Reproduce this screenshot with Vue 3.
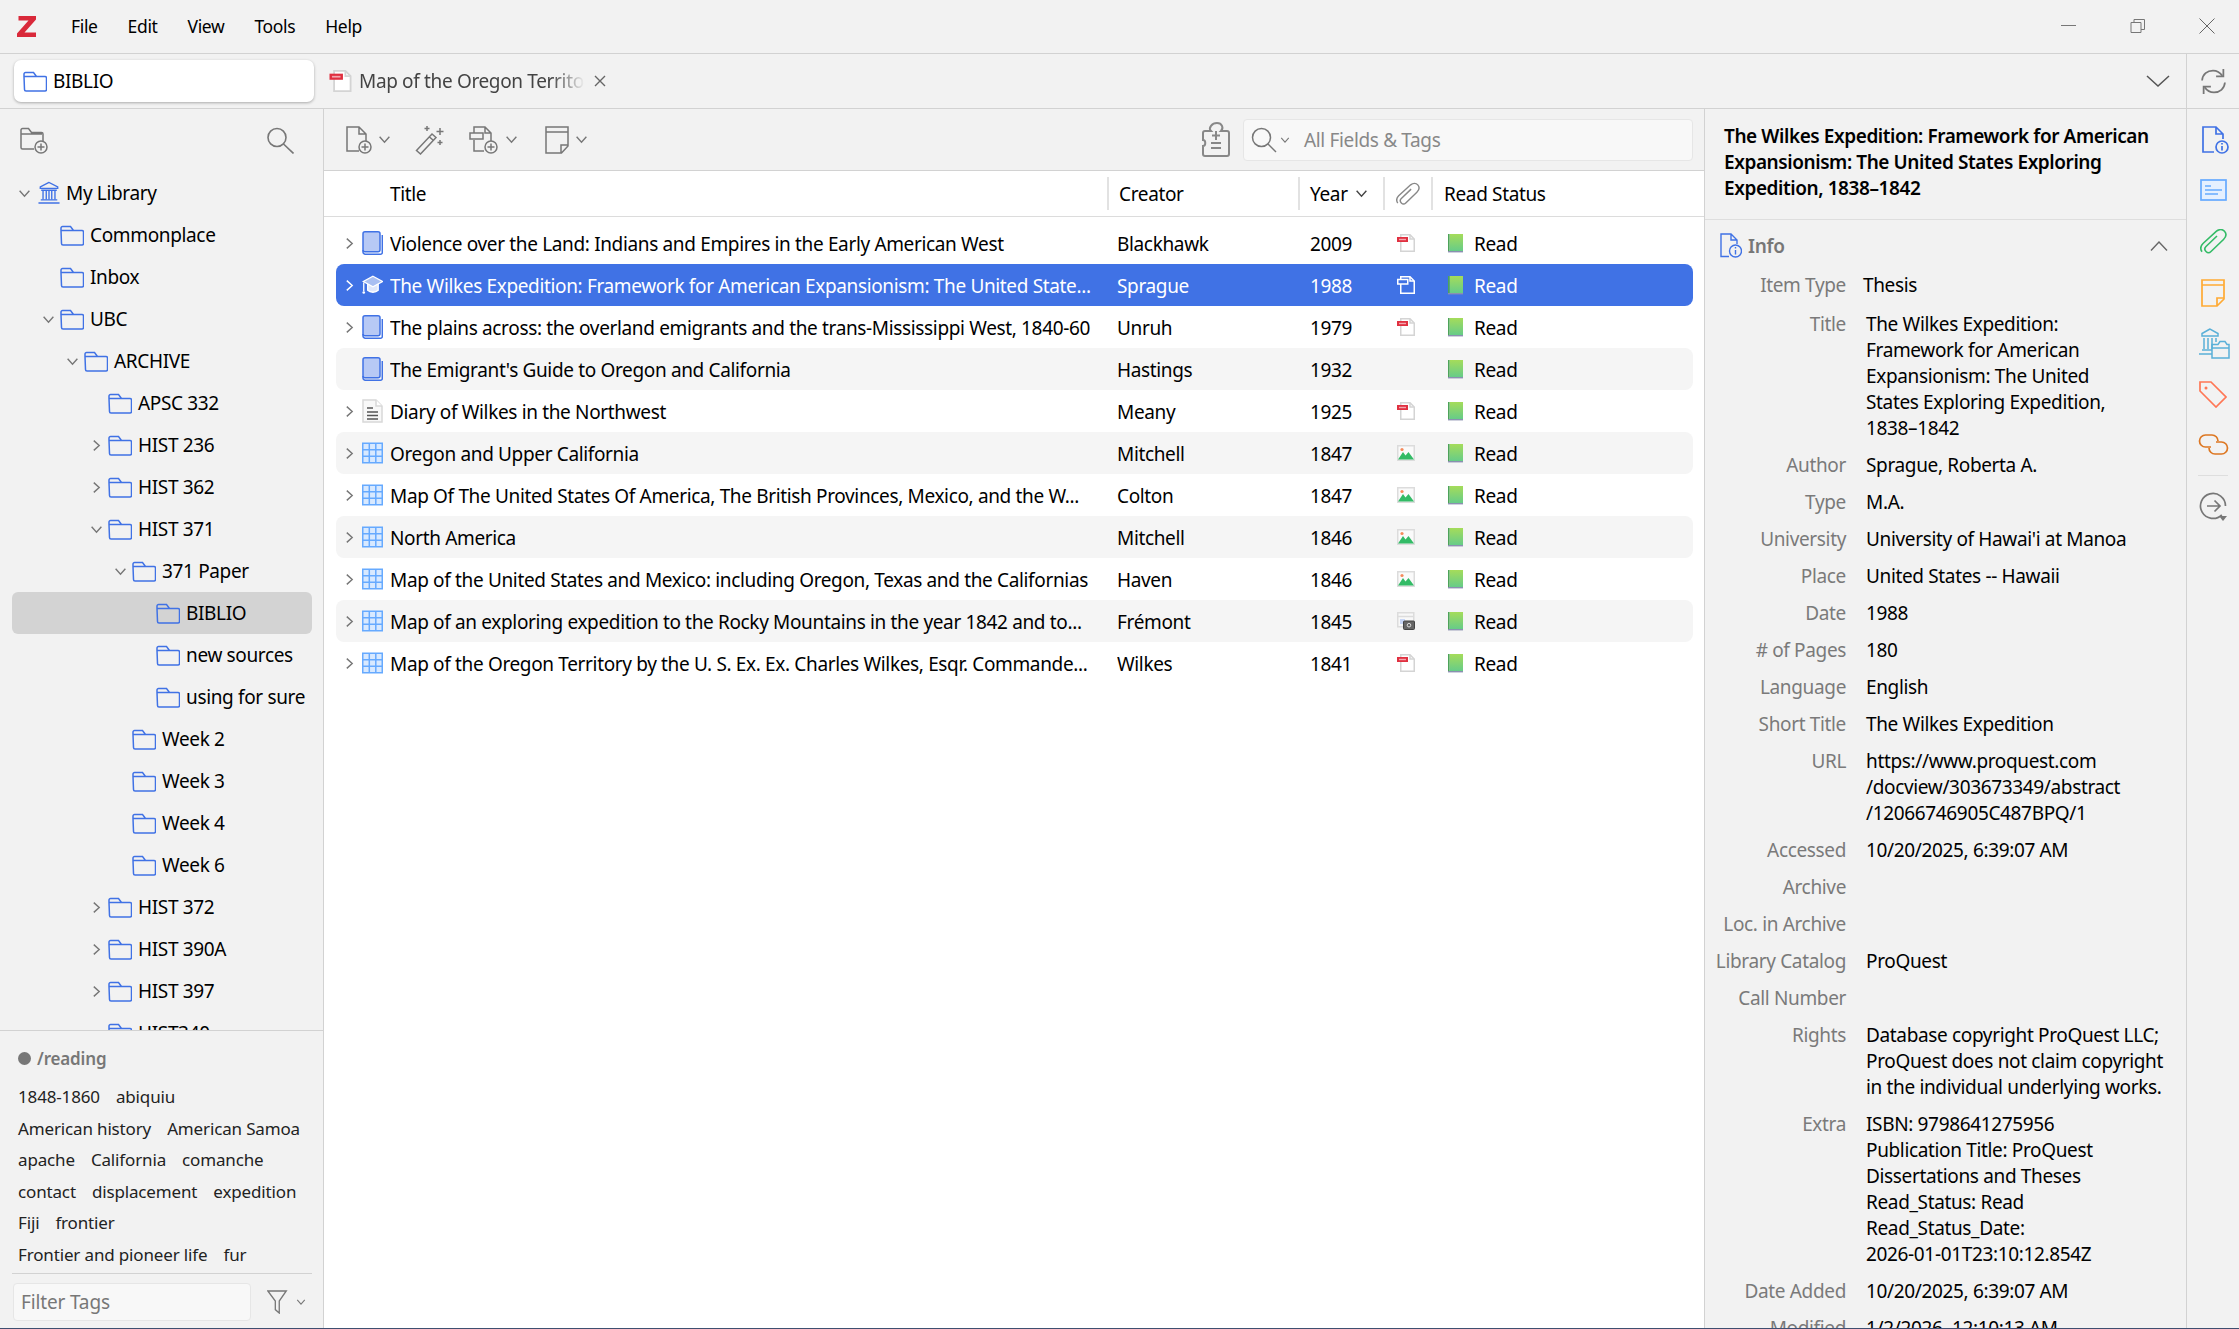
<template>
  <div class="app">
    <svg class="sprite" width="0" height="0">
      <defs>
        <symbol id="folder" viewBox="0 0 24 21">
          <path d="M1 5.5V3a1.5 1.5 0 0 1 1.5-1.5h8l3 4h8.500a1.500 1.500 0 0 1 1.500 1.500v11.500a1.500 1.500 0 0 1-1.500 1.500h-19a1.500 1.500 0 0 1-1.500-1.500zM1 5.500h12.500" fill="none" stroke="#4072e5" stroke-width="1.5" />
        </symbol>
        <symbol id="library" viewBox="0 0 24 25">
          <g fill="none" stroke="#4072e5" stroke-width="1.5">
            <path d="M12 1.5 2.500 6.500V8h19V6.500zM3.500 10h17M3 20.500h18M.5 24h23" />
            <path d="M5.500 10v10M9 10v10M12 10v10M15 10v10M18.500 10v10" />
          </g>
        </symbol>
        <symbol id="book" viewBox="0 0 21 24">
          <rect x="1" y=".75" width="17" height="20" rx="2" fill="#b7c9f5" stroke="#4072e5" stroke-width="1.5" />
          <path d="M1 19v2a2.200 2.200 0 0 0 2.200 2.200H18.500a1.800 1.800 0 0 0 1.800-1.800V4" fill="none" stroke="#4072e5" stroke-width="1.5" />
        </symbol>
        <symbol id="thesis" viewBox="0 0 24 24">
          <path d="M6.500 10v8c3 3 9 3 12 0v-8z" fill="#dfe7fb" stroke="#fff" stroke-width="1.5" />
          <path d="M12.500 2 23.500 8l-11 6L1.500 8z" fill="#a9bff2" stroke="#fff" stroke-width="1.5" />
          <path d="M2 9v10" fill="none" stroke="#fff" stroke-width="1.5" />
          <circle cx="2" cy="20.500" r="1.5" fill="#fff" />
        </symbol>
        <symbol id="doc" viewBox="0 0 21 24">
          <path d="M1 1h13l6 6v16H1z" fill="#f8f8f8" stroke="#d8d8d8" stroke-width="1.5" />
          <path d="M14 1v6h6" fill="#fff" stroke="#d8d8d8" stroke-width="1.5" />
          <path d="M5 9h6M5 13h11M5 16.500h11M5 20h11" stroke="#555" stroke-width="1.5" />
        </symbol>
        <symbol id="map" viewBox="0 0 21 21">
          <rect x=".75" y=".75" width="19.5" height="19.5" fill="#d8e9ff" stroke="#66aaff" stroke-width="1.5" />
          <path d="M7.300 1v19M13.800 1v19M1 7.300h19M1 13.800h19" stroke="#66aaff" stroke-width="1.5" />
        </symbol>
        <symbol id="pdf" viewBox="0 0 18 18">
          <path d="M3.750.75h9.250l4.250 4.250v12.250H3.750z" fill="#fff" stroke="#d4d4d4" stroke-width="1.5" />
          <path d="M13 1v4h4" fill="none" stroke="#d4d4d4" stroke-width="1.5" />
          <rect y="3" width="11" height="5" fill="#e03040" />
          <rect x="2" y="4.800" width="7" height="1.400" fill="#f2a6ae" />
        </symbol>
        <symbol id="pdfwhite" viewBox="0 0 18 18">
          <path d="M3.750 8V.75h9.250l4.250 4.250v12.250H3.750z" fill="none" stroke="#fff" stroke-width="1.5" />
          <path d="M13 1v4h4" fill="none" stroke="#fff" stroke-width="1.5" />
          <rect x=".75" y="3.500" width="10" height="4.500" fill="#4072e5" stroke="#fff" stroke-width="1.5" />
        </symbol>
        <symbol id="image" viewBox="0 0 18 16">
          <rect x=".75" y=".75" width="16.500" height="14.500" fill="#fafafa" stroke="#dcdcdc" stroke-width="1.5" />
          <circle cx="5" cy="4.500" r="1.600" fill="#f58a5c" />
          <path d="M1 14.500 6 7l2.500 3.500L11.500 7 17 14.500z" fill="#33bb66" />
        </symbol>
        <symbol id="snapshot" viewBox="0 0 18 18">
          <rect x=".75" y=".75" width="16" height="14" fill="#f8f8f8" stroke="#dcdcdc" stroke-width="1.5" />
          <path d="M1 4.500h15.500" stroke="#dcdcdc" stroke-width="1.5" />
          <rect x="3" y="7" width="5" height="5" fill="#c8d6f5" />
          <rect x="6.500" y="9" width="11" height="8.500" rx="1" fill="#666" stroke="#444" />
          <circle cx="12" cy="13.200" r="1.800" fill="#666" stroke="#ddd" />
        </symbol>
        <symbol id="readbook" viewBox="0 0 15 19">
          <defs>
            <linearGradient id="readfill" x1="0" y1="0" x2="0" y2="1">
              <stop offset="0" stop-color="#a5dc5a" />
              <stop offset="1" stop-color="#66cc88" />
            </linearGradient>
          </defs>
          <rect x="1.5" width="13.5" height="17" fill="url(#readfill)" />
          <rect width="1.5" height="17" fill="#4da35a" />
          <rect y="17" width="15" height="1.4" fill="#8a90b0" />
        </symbol>
        <symbol id="chev" viewBox="0 0 12 12">
          <path d="M1.500 3.500 6 8.500l4.500-5" fill="none" stroke="currentColor" stroke-width="1.3" />
        </symbol>
        <symbol id="clip" viewBox="0 0 27 25">
          <path d="M17 7 6 17.500c-1.500 1.500-1.500 3.500 0 5s3.500 1.500 5 0L23.500 10.500c3-3 3-6 1-8.300s-5.500-2-8 0L3 14.500c-3 3-2.500 6-1 8.300" fill="none" stroke="currentColor" stroke-width="1.6" />
        </symbol>
      </defs>
    </svg>

    <header class="titlebar">
      <svg class="logo" viewBox="0 0 19 21">
        <path d="M1.500 0H19v3.500L7.500 16.500H19V21H0v-3.500L11.500 4.500H1.500z" fill="#d9293a" />
      </svg>
      <nav class="menu">
        <span v-for="m in menus" :key="m">{{ m }}</span>
      </nav>
      <div class="winbtns">
        <svg width="16" height="16" viewBox="0 0 16 16"><path d="M0 7.500h15" stroke="#777" /></svg>
        <svg width="16" height="16" viewBox="0 0 16 16"><path d="M1 4.500h10v10H1zM4 4.500v-3h10.500v10h-3.500" fill="none" stroke="#777" /></svg>
        <svg width="16" height="16" viewBox="0 0 16 16"><path d="M.5.500l15 15M15.500.500l-15 15" stroke="#666" /></svg>
      </div>
    </header>

    <div class="tabbar">
      <div class="tabs">
        <div class="tab active">
          <svg class="ico-folder"><use href="#folder" /></svg>
          <span>BIBLIO</span>
        </div>
        <div class="tab reader">
          <svg class="ico-tabpdf"><use href="#pdf" /></svg>
          <span class="fade">Map of the Oregon Territory</span>
          <svg class="ico-x" viewBox="0 0 12 12"><path d="M1 1l10 10M11 1 1 11" stroke="#666" stroke-width="1.4" /></svg>
        </div>
        <svg class="tabs-more" viewBox="0 0 24 12"><path d="M1 1l11 10L23 1" fill="none" stroke="#555" stroke-width="1.5" /></svg>
      </div>
      <div class="sync">
        <svg width="27" height="25" viewBox="0 0 26 24" fill="none" stroke="#777" stroke-width="1.7">
          <path d="M2 11C2.500 5 7 1.500 12.500 1.500c4 0 7 2 9 5M24 13c-.5 6-5 9.500-10.500 9.500-4 0-7-2-9-5" />
          <path d="M22.500 0v7h-7M3.500 24v-7h7" />
        </svg>
      </div>
    </div>

    <div class="body">
      <aside class="left">
        <div class="left-tools">
          <svg width="28" height="27" viewBox="0 0 28 27" fill="none" stroke="#777" stroke-width="1.5">
            <path d="M14 22H2.500A1.500 1.500 0 0 1 1 20.500V3a1.500 1.500 0 0 1 1.500-1.500h6l3 4h10a1.500 1.500 0 0 1 1.500 1.500v7M1 7h21" />
            <circle cx="21" cy="20" r="6" />
            <path d="M21 16.500v7M17.500 20h7" />
          </svg>
          <svg width="28" height="27" viewBox="0 0 28 27" fill="none" stroke="#777" stroke-width="1.6">
            <circle cx="11" cy="10.500" r="9" />
            <path d="M17.500 17l10 9.500" />
          </svg>
        </div>
        <div class="tree">
          <div
            v-for="c in collections"
            :key="c.name"
            class="tree-row"
            :class="{ selected: c.selected }"
            :style="{ paddingLeft: 12 + c.level * 24 + 'px' }"
          >
            <span class="twisty">
              <svg v-if="c.arrow === 'open'" class="arrow" viewBox="0 0 12 12"><use href="#chev" /></svg>
              <svg v-else-if="c.arrow === 'closed'" class="arrow closed" viewBox="0 0 12 12"><use href="#chev" /></svg>
            </span>
            <svg v-if="c.root" class="ico-lib"><use href="#library" /></svg>
            <svg v-else class="ico-folder"><use href="#folder" /></svg>
            <span class="tree-label">{{ c.name }}</span>
          </div>
        </div>
        <div class="tags">
          <div class="tag-coloured"><i></i>/reading</div>
          <div v-for="(line, i) in tagLines" :key="i" class="tag-line">
            <span v-for="t in line" :key="t">{{ t }}</span>
          </div>
          <div class="tag-foot">
            <div class="tag-filter">Filter Tags</div>
            <svg width="21" height="24" viewBox="0 0 24 25" fill="none" stroke="#777" stroke-width="1.5" preserveAspectRatio="none">
              <path d="M1 1h21l-8 10.500V24l-4.500-3.500v-9z" />
            </svg>
            <svg class="mini-chev small filter-chev"><use href="#chev" /></svg>
          </div>
        </div>
      </aside>

      <main class="center">
        <div class="center-tools">
          <svg class="tool first" width="26" height="28" viewBox="0 0 26 28" fill="none" stroke="#777" stroke-width="1.5">
            <path d="M13 25H1V1h12l7 7v7M13 1v7h7" />
            <circle cx="19" cy="21" r="6" />
            <path d="M19 17.500v7M15.500 21h7" />
          </svg>
          <svg class="mini-chev"><use href="#chev" /></svg>
          <svg class="tool wand" width="31" height="30" viewBox="0 0 31 30" fill="none" stroke="#777" stroke-width="1.5">
            <path d="M1.500 25.500 17 9l4 3.500L5.500 29zM14.500 12l4 3.500" />
            <path d="M12 1v5M9.500 3.500h5M25 3v7M21.500 6.500h7M25 15v5M22.500 17.500h5" />
          </svg>
          <svg class="tool attach" width="30" height="28" viewBox="0 0 30 28" fill="none" stroke="#777" stroke-width="1.5">
            <path d="M5 7V1h11l6 6v8M16 1v6h6M5 14v11h10" />
            <rect x="1" y="7" width="13" height="6" />
            <circle cx="22" cy="21" r="6" />
            <path d="M22 17.500v7M18.500 21h7" />
          </svg>
          <svg class="mini-chev"><use href="#chev" /></svg>
          <svg class="tool note" width="24" height="28" viewBox="0 0 24 28" fill="none" stroke="#777" stroke-width="1.5">
            <path d="M1 1h22v19l-6.500 7H1zM1 6h22M23 19h-7v8" />
          </svg>
          <svg class="mini-chev"><use href="#chev" /></svg>
          <span class="spacer"></span>
          <svg class="locate" width="28" height="35" viewBox="0 0 28 35" fill="none" stroke="#888" stroke-width="2">
            <path d="M9 9H3a2 2 0 0 0-2 2v7c3 0 3 6 0 6v8a2 2 0 0 0 2 2h22a2 2 0 0 0 2-2V11a2 2 0 0 0-2-2h-6c3-3 1-8-4-8S6 6 9 9z" />
            <path d="M14 9v9M10 13.500h8M9 21h10M9 26h10" />
          </svg>
          <div class="search">
            <svg width="26" height="26" viewBox="0 0 26 26" fill="none" stroke="#777" stroke-width="1.5">
              <circle cx="10.500" cy="10.500" r="9" />
              <path d="M17 17l8 8" />
            </svg>
            <svg class="mini-chev small"><use href="#chev" /></svg>
            <span>All Fields &amp; Tags</span>
          </div>
        </div>

        <div class="columns">
          <div class="col c-title">Title</div>
          <div class="col c-creator">Creator</div>
          <div class="col c-year">Year<svg class="mini-chev"><use href="#chev" /></svg></div>
          <div class="col c-clip">
            <svg class="head-clip"><use href="#clip" /></svg>
          </div>
          <div class="col c-status">Read Status</div>
        </div>

        <div class="rows">
          <div
            v-for="(r, i) in items"
            :key="r.title"
            class="row"
            :class="{ selected: i === 1, alt: i !== 1 && i % 2 === 1 }"
          >
            <span class="twisty">
              <svg v-if="r.arrow !== false" class="arrow closed" viewBox="0 0 12 12"><use href="#chev" /></svg>
            </span>
            <svg class="ico-type"><use :href="'#' + r.type" /></svg>
            <span class="cell">{{ r.title }}</span>
            <span class="cell">{{ r.creator }}</span>
            <span class="cell">{{ r.year }}</span>
            <span class="cell-att">
              <svg v-if="r.att" class="ico-att"><use :href="'#' + r.att" /></svg>
            </span>
            <span class="status">
              <svg class="ico-read"><use href="#readbook" /></svg>
              <span class="cell">Read</span>
            </span>
          </div>
        </div>
      </main>

      <section class="info">
        <div class="info-head">
          The Wilkes Expedition: Framework for American<br />
          Expansionism: The United States Exploring<br />
          Expedition, 1838–1842
        </div>
        <div class="info-section">
          <svg width="22" height="25" viewBox="0 0 22 25" fill="none" stroke="#4072e5" stroke-width="1.4">
            <path d="M9 23.500H1V1h10l6 6v4M11 1v6h6" />
            <circle cx="15.500" cy="18" r="6" />
            <path d="M15.500 17v4.500M15.500 14v1.500" />
          </svg>
          <span>Info</span>
          <span class="spacer"></span>
          <svg width="18" height="10" viewBox="0 0 18 10" fill="none" stroke="#666" stroke-width="1.4"><path d="M1 9.500 9 1l8 8.500" /></svg>
        </div>
        <div class="fields">
          <div v-for="f in fields" :key="f.label" class="field" :class="f.cls">
            <div class="f-label">{{ f.label }}</div>
            <div class="f-value">
              <div v-for="l in f.lines" :key="l">{{ l }}</div>
            </div>
          </div>
        </div>
      </section>

      <nav class="rail">
        <svg class="r-info" width="27" height="28" viewBox="0 0 27 28" fill="none" stroke="#4072e5" stroke-width="1.7">
          <path d="M12 26H1V1h13l7 7v5M14 1v7h7" />
          <circle cx="20" cy="21" r="6" />
          <path d="M20 20v4.500M20 17v1.500" />
        </svg>
        <svg class="r-abs" width="27" height="22" viewBox="0 0 27 22" fill="none" stroke="#66aaff" stroke-width="1.7">
          <rect x="1" y="1" width="25" height="20" fill="#e5f0ff" />
          <path d="M5 7h6M5 11h17M5 15h13" />
        </svg>
        <svg class="r-att"><use href="#clip" /></svg>
        <svg class="r-note" width="24" height="28" viewBox="0 0 24 28" fill="none" stroke="#ffaa33" stroke-width="1.7">
          <path d="M1 1h22v19l-7 7H1zM1 6h22M23 19h-7v8" />
        </svg>
        <svg class="r-lib" width="31" height="31" viewBox="0 0 31 31" fill="none" stroke="#5ab0d8" stroke-width="1.5">
          <path d="M11 1 3 5.500V8h16V5.500zM5 10v11M9 10v11M13 10v11M17 10v4M3 22h10M0 26h13" />
          <path d="M13 30V16.500h6l2-3h5l2 3h2V30z" />
          <path d="M13 20h17" />
        </svg>
        <svg class="r-tag" width="28" height="27" viewBox="0 0 28 27" fill="none" stroke="#ff7755" stroke-width="1.7">
          <path d="M1 1h11l15 15-10 10L1 10z" />
          <circle cx="7" cy="7" r="1.5" fill="#ff7755" stroke="none" />
        </svg>
        <svg class="r-rel" width="31" height="21" viewBox="0 0 31 21" fill="none" stroke="#dd7722" stroke-width="1.7">
          <path d="M13 13H7.500a6 6 0 0 1 0-12H14a6 6 0 0 1 6 6" />
          <path d="M18 8h5.500a6 6 0 0 1 0 12H17a6 6 0 0 1-6-6" />
        </svg>
        <div class="rail-sep"></div>
        <svg class="r-loc" width="31" height="34" viewBox="0 0 31 34" fill="none" stroke="#777" stroke-width="1.7">
          <path d="M22.800 22.800A12.500 12.500 0 1 1 26.500 14" />
          <path d="M8 14h13M15.500 8.500 21 14l-5.500 5.500" />
          <path d="M20 24h8l-4 5z" fill="#777" stroke="none" />
        </svg>
      </nav>
    </div>
  </div>
</template>

<script setup>
const menus = ['File', 'Edit', 'View', 'Tools', 'Help'];

const collections = [
  { name: 'My Library', level: 0, arrow: 'open', root: true },
  { name: 'Commonplace', level: 1 },
  { name: 'Inbox', level: 1 },
  { name: 'UBC', level: 1, arrow: 'open' },
  { name: 'ARCHIVE', level: 2, arrow: 'open' },
  { name: 'APSC 332', level: 3 },
  { name: 'HIST 236', level: 3, arrow: 'closed' },
  { name: 'HIST 362', level: 3, arrow: 'closed' },
  { name: 'HIST 371', level: 3, arrow: 'open' },
  { name: '371 Paper', level: 4, arrow: 'open' },
  { name: 'BIBLIO', level: 5, selected: true },
  { name: 'new sources', level: 5 },
  { name: 'using for sure', level: 5 },
  { name: 'Week 2', level: 4 },
  { name: 'Week 3', level: 4 },
  { name: 'Week 4', level: 4 },
  { name: 'Week 6', level: 4 },
  { name: 'HIST 372', level: 3, arrow: 'closed' },
  { name: 'HIST 390A', level: 3, arrow: 'closed' },
  { name: 'HIST 397', level: 3, arrow: 'closed' },
  { name: 'HIST340', level: 3 }
];

const tagLines = [
  ['1848-1860', 'abiquiu'],
  ['American history', 'American Samoa'],
  ['apache', 'California', 'comanche'],
  ['contact', 'displacement', 'expedition'],
  ['Fiji', 'frontier'],
  ['Frontier and pioneer life', 'fur']
];

const items = [
  { type: 'book', title: 'Violence over the Land: Indians and Empires in the Early American West', creator: 'Blackhawk', year: '2009', att: 'pdf' },
  { type: 'thesis', title: 'The Wilkes Expedition: Framework for American Expansionism: The United State...', creator: 'Sprague', year: '1988', att: 'pdfwhite' },
  { type: 'book', title: 'The plains across: the overland emigrants and the trans-Mississippi West, 1840-60', creator: 'Unruh', year: '1979', att: 'pdf' },
  { type: 'book', title: "The Emigrant's Guide to Oregon and California", creator: 'Hastings', year: '1932', arrow: false },
  { type: 'doc', title: 'Diary of Wilkes in the Northwest', creator: 'Meany', year: '1925', att: 'pdf' },
  { type: 'map', title: 'Oregon and Upper California', creator: 'Mitchell', year: '1847', att: 'image' },
  { type: 'map', title: 'Map Of The United States Of America, The British Provinces, Mexico, and the W...', creator: 'Colton', year: '1847', att: 'image' },
  { type: 'map', title: 'North America', creator: 'Mitchell', year: '1846', att: 'image' },
  { type: 'map', title: 'Map of the United States and Mexico: including Oregon, Texas and the Californias', creator: 'Haven', year: '1846', att: 'image' },
  { type: 'map', title: 'Map of an exploring expedition to the Rocky Mountains in the year 1842 and to...', creator: 'Frémont', year: '1845', att: 'snapshot' },
  { type: 'map', title: 'Map of the Oregon Territory by the U. S. Ex. Ex. Charles Wilkes, Esqr. Commande...', creator: 'Wilkes', year: '1841', att: 'pdf' }
];

const fields = [
  { label: 'Item Type', lines: ['Thesis'], cls: 'first' },
  { label: 'Title', lines: ['The Wilkes Expedition:', 'Framework for American', 'Expansionism: The United', 'States Exploring Expedition,', '1838–1842'] },
  { label: 'Author', lines: ['Sprague, Roberta A.'] },
  { label: 'Type', lines: ['M.A.'] },
  { label: 'University', lines: ["University of Hawai'i at Manoa"] },
  { label: 'Place', lines: ['United States -- Hawaii'] },
  { label: 'Date', lines: ['1988'] },
  { label: '# of Pages', lines: ['180'] },
  { label: 'Language', lines: ['English'] },
  { label: 'Short Title', lines: ['The Wilkes Expedition'] },
  { label: 'URL', lines: ['https://www.proquest.com', '/docview/303673349/abstract', '/12066746905C487BPQ/1'] },
  { label: 'Accessed', lines: ['10/20/2025, 6:39:07 AM'] },
  { label: 'Archive', lines: [''] },
  { label: 'Loc. in Archive', lines: [''] },
  { label: 'Library Catalog', lines: ['ProQuest'] },
  { label: 'Call Number', lines: [''] },
  { label: 'Rights', lines: ['Database copyright ProQuest LLC;', 'ProQuest does not claim copyright', 'in the individual underlying works.'] },
  { label: 'Extra', lines: ['ISBN: 9798641275956', 'Publication Title: ProQuest', 'Dissertations and Theses', 'Read_Status: Read', 'Read_Status_Date:', '2026-01-01T23:10:12.854Z'] },
  { label: 'Date Added', lines: ['10/20/2025, 6:39:07 AM'] },
  { label: 'Modified', lines: ['1/2/2026, 12:10:13 AM'] }
];
</script>

<style>
html,
body {
  margin: 0;
  background: #f2f2f2;
}
</style>

<style scoped>
.app {
  width: 2239px;
  height: 1329px;
  display: flex;
  flex-direction: column;
  overflow: hidden;
  background: #f2f2f2;
  color: #000;
  font-family: "Noto Sans", sans-serif;
  font-size: 19px;
  letter-spacing: -0.35px;
  box-sizing: border-box;
  border-bottom: 1px solid #3f4f70;
}

.sprite {
  position: absolute;
}

.spacer {
  flex: 1;
}

/* title bar */
.titlebar {
  height: 53px;
  flex: none;
  display: flex;
  align-items: center;
  border-bottom: 1px solid #d2d2d2;
  font-size: 17.5px;
}

.logo {
  width: 19px;
  height: 21px;
  margin-left: 17px;
}

.menu {
  display: flex;
  gap: 30px;
  margin-left: 35px;
  margin-top: -1px;
}

.winbtns {
  margin-left: auto;
  margin-right: 24px;
  display: flex;
  gap: 53px;
  margin-top: -1px;
}

/* tabs */
.tabbar {
  height: 54px;
  flex: none;
  display: flex;
  border-bottom: 1px solid #d2d2d2;
}

.tabs {
  flex: 1;
  display: flex;
  align-items: center;
  padding-left: 14px;
  padding-right: 16px;
}

.tab {
  display: flex;
  align-items: center;
}

.tab.active {
  width: 300px;
  height: 42px;
  box-sizing: border-box;
  padding-left: 9px;
  gap: 6px;
  background: #fff;
  border-radius: 7px;
  box-shadow: 0 1px 3px rgba(0, 0, 0, 0.3);
}

.tab.reader {
  margin-left: 15px;
  color: #444;
}

.ico-tabpdf {
  width: 23px;
  height: 22px;
  margin-right: 7px;
}

.fade {
  width: 226px;
  overflow: hidden;
  white-space: nowrap;
  -webkit-mask-image: linear-gradient(to right, #000 85%, transparent);
  mask-image: linear-gradient(to right, #000 85%, transparent);
}

.ico-x {
  width: 12px;
  height: 12px;
  margin-left: 9px;
}

.tabs-more {
  width: 24px;
  height: 12px;
  margin-left: auto;
}

.sync {
  width: 52px;
  flex: none;
  border-left: 1px solid #d2d2d2;
  display: flex;
  align-items: center;
  justify-content: center;
}

/* main panes */
.body {
  flex: 1;
  min-height: 0;
  display: flex;
}

.left {
  width: 324px;
  flex: none;
  box-sizing: border-box;
  border-right: 1px solid #d2d2d2;
  display: flex;
  flex-direction: column;
}

.left-tools {
  height: 63px;
  flex: none;
  display: flex;
  align-items: center;
  justify-content: space-between;
  padding: 0 29px 0 20px;
  box-sizing: border-box;
}

.tree {
  flex: 1;
  min-height: 0;
  overflow: hidden;
  padding: 0 11px 0 12px;
}

.tree-row {
  height: 42px;
  display: flex;
  align-items: center;
  margin-left: -12px;
  box-sizing: border-box;
  white-space: nowrap;
}

.tree-row.selected {
  margin-left: 0;
  padding-left: 120px !important;
  background: #d3d3d3;
  border-radius: 6px;
}

.twisty {
  width: 24px;
  flex: none;
  display: flex;
  align-items: center;
  justify-content: center;
  color: #777;
}

.arrow {
  width: 13px;
  height: 13px;
}

.arrow.closed {
  transform: rotate(-90deg);
}

.ico-folder {
  width: 24px;
  height: 21px;
  flex: none;
}

.ico-lib {
  width: 22px;
  height: 25px;
  flex: none;
  margin-left: 2px;
  margin-top: -2px;
}

.tree-label {
  margin-left: 6px;
}

.tags {
  height: 298px;
  flex: none;
  box-sizing: border-box;
  border-top: 1px solid #d2d2d2;
  padding: 11px 11px 0 12px;
  display: flex;
  flex-direction: column;
  font-size: 17px;
  letter-spacing: -0.15px;
  color: #222;
}

.tag-coloured {
  height: 32px;
  display: flex;
  align-items: center;
  padding-left: 6px;
  font-weight: 600;
  color: #777;
  margin-bottom: 7px;
}

.tag-coloured i {
  width: 13px;
  height: 13px;
  border-radius: 50%;
  background: #777;
  margin-right: 6px;
}

.tag-line {
  height: 31.5px;
  display: flex;
  align-items: center;
  gap: 16px;
  padding-left: 6px;
  white-space: nowrap;
}

.tag-foot {
  margin-top: auto;
  height: 55px;
  box-sizing: border-box;
  border-top: 1px solid #d2d2d2;
  display: flex;
  align-items: center;
  padding: 9px 0 7px 1px;
}

.tag-filter {
  width: 238px;
  height: 38px;
  box-sizing: border-box;
  padding-left: 7px;
  background: #f8f8f8;
  border: 1px solid #e6e6e6;
  border-radius: 4px;
  display: flex;
  align-items: center;
  font-size: 19px;
  color: #777;
  margin-right: 16px;
}

.mini-chev {
  width: 13px;
  height: 13px;
  color: #777;
  margin-left: 6px;
  flex: none;
}

.mini-chev.small {
  width: 10px;
  height: 10px;
  margin-left: 3px;
}

.mini-chev.filter-chev {
  margin-left: 8px;
}

/* items */
.center {
  flex: 1;
  min-width: 0;
  background: #fff;
  display: flex;
  flex-direction: column;
}

.center-tools {
  height: 62px;
  flex: none;
  box-sizing: border-box;
  background: #f2f2f2;
  border-bottom: 1px solid #d2d2d2;
  display: flex;
  align-items: center;
  padding: 0 11px 0 22px;
}

.tool.wand {
  margin-left: 24px;
}

.tool.attach {
  margin-left: 23px;
}

.tool.note {
  margin-left: 27px;
}

.locate {
  margin-right: 13px;
}

.search {
  width: 450px;
  height: 42px;
  box-sizing: border-box;
  background: #f8f8f8;
  border: 1px solid #e6e6e6;
  border-radius: 4px;
  display: flex;
  align-items: center;
  padding-left: 7px;
  color: #888;
}

.search span {
  margin-left: 14px;
}

.columns {
  height: 46px;
  flex: none;
  box-sizing: border-box;
  border-bottom: 1px solid #dcdcdc;
  display: grid;
  grid-template-columns: 783px 191px 85px 48px 1fr;
  align-items: center;
}

.col {
  height: 33px;
  display: flex;
  align-items: center;
  box-sizing: border-box;
  border-left: 2px solid #e2e2e2;
  padding-left: 10px;
}

.c-title {
  border-left: 0;
  padding-left: 66px;
}

.c-year .mini-chev {
  margin-left: 7px;
  color: #444;
}

.c-clip {
  padding-left: 11px;
}

.head-clip {
  width: 24px;
  height: 24px;
  color: #888;
}

.c-status {
  padding-left: 11px;
}

.rows {
  padding: 5px 11px 0 12px;
}

.row {
  height: 42px;
  display: grid;
  grid-template-columns: 26px 28px 727px 193px 87px 51px 1fr;
  align-items: center;
  border-radius: 8px;
  white-space: nowrap;
}

.row.alt {
  background: #f5f5f5;
}

.row.selected {
  background: #4072e5;
  color: #fff;
}

.row .twisty {
  width: 26px;
}

.row.selected .twisty {
  color: #fff;
}

.ico-type {
  width: 21px;
  height: 24px;
}

.cell {
  overflow: hidden;
  padding-top: 1px;
}

.cell-att {
  display: flex;
  align-items: center;
}

.ico-att {
  width: 18px;
  height: 18px;
}

.status {
  display: flex;
  align-items: center;
  gap: 11px;
}

.ico-read {
  width: 15px;
  height: 19px;
}

/* info pane */
.info {
  width: 482px;
  flex: none;
  box-sizing: border-box;
  border-left: 1px solid #d2d2d2;
  overflow: hidden;
}

.info-head {
  padding: 14px 16px 18px 19px;
  line-height: 26px;
  font-weight: 600;
  letter-spacing: -0.42px;
  border-bottom: 1px solid #dedede;
  white-space: nowrap;
}

.info-section {
  height: 51px;
  box-sizing: border-box;
  display: flex;
  align-items: center;
  padding: 0 18px 0 15px;
  color: #777;
  font-weight: 600;
  gap: 6px;
}

.fields {
  display: flex;
  flex-direction: column;
  gap: 11px;
  line-height: 26px;
  padding-top: 1px;
}

.field {
  display: grid;
  grid-template-columns: 141px 1fr;
  column-gap: 20px;
  white-space: nowrap;
}

.field.first {
  margin-bottom: 2px;
}

.field.first .f-value {
  margin-left: -3px;
}

.f-label {
  text-align: right;
  color: #7a7a7a;
}

.f-value {
  min-height: 26px;
}

/* right rail */
.rail {
  width: 53px;
  flex: none;
  box-sizing: border-box;
  border-left: 1px solid #d2d2d2;
  display: flex;
  flex-direction: column;
  align-items: center;
}

.r-info {
  margin: 17px 0 0 4px;
  flex: none;
}

.r-abs {
  margin-top: 25px;
  flex: none;
}

.r-att {
  width: 27px;
  height: 25px;
  margin-top: 28px;
  flex: none;
  color: #33bb66;
}

.r-note {
  margin-top: 25px;
  flex: none;
}

.r-lib {
  margin-top: 21px;
  margin-left: 2px;
  flex: none;
}

.r-tag {
  margin-top: 22px;
  flex: none;
}

.r-rel {
  margin-top: 26px;
  margin-left: 1px;
  flex: none;
}

.rail-sep {
  width: 30px;
  height: 1px;
  margin-top: 20px;
  background: #dedede;
  flex: none;
}

.r-loc {
  margin-top: 16px;
  margin-left: 3px;
  flex: none;
}
</style>
